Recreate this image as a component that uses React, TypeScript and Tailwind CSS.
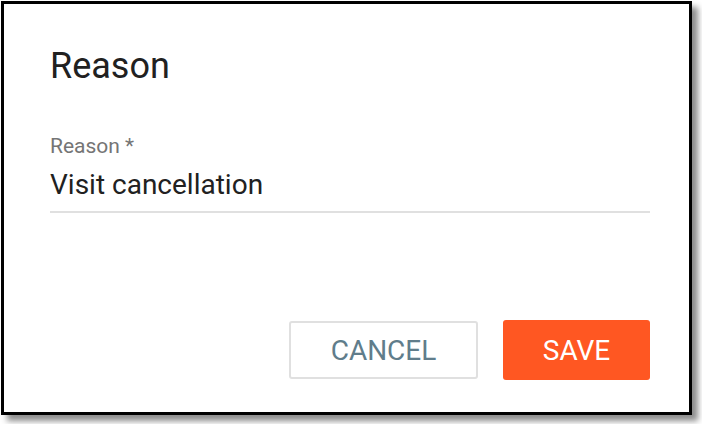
export default function App() {
  return (
    <div className="w-[702px] h-[424px] bg-white" style={{ fontFamily: 'Roboto, "Liberation Sans", sans-serif' }}>
      <div className="ml-[1px] mt-[1px] w-[691px] h-[414px] border-[3px] border-black bg-white shadow-[6px_6px_6px_rgba(0,0,0,0.45)] pl-[46px] pt-[42px]">
        <div className="w-[600px]">
          <h2 className="text-[36px] leading-[40px] text-[#212121]">Reason</h2>

          {/* Reason field */}
          <div className="mt-[48px] border-b-2 border-[#e0e0e0] pb-[10px]">
            <label className="block text-[21px] leading-[24px] text-[#757575]">Reason *</label>
            <div className="mt-[11px] text-[28px] leading-[32px] text-[#212121]">Visit cancellation</div>
          </div>

          <div className="mt-[107px] flex items-center justify-end gap-[25px]">
            <button className="w-[189px] h-[58px] border-2 border-[#e0e0e0] rounded-[3px] text-[28px] text-[#607d8b] pt-[2px]">
              CANCEL
            </button>
            <button className="w-[147px] h-[60px] rounded-[3px] bg-[#ff5722] text-[28px] text-white pt-[2px]">
              SAVE
            </button>
          </div>
        </div>
      </div>
    </div>
  )
}
